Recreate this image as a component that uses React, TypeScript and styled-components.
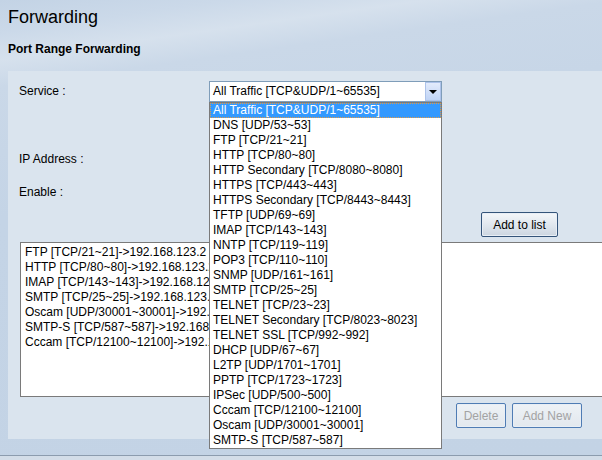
import React from "react";
import styled, { createGlobalStyle, css } from "styled-components";

const GlobalStyle = createGlobalStyle`
  html, body { margin: 0; padding: 0; }
  body {
    font-family: "Liberation Sans", Arial, sans-serif;
    font-size: 12px;
    color: #000;
  }
  * { box-sizing: border-box; }
`;

const Page = styled.div`
  width: 602px;
  height: 460px;
  overflow: hidden;
  padding-top: 7px;
  background: linear-gradient(172deg, #c3d3e5 0%, #cbd9e9 6%, #d6e1ed 11%, #cad8e8 16%, #c4d4e6 40%, #c3d3e5 100%);
`;

const Title = styled.h1`
  margin: 0 0 0 8px;
  font-size: 18px;
  line-height: 20px;
  font-weight: normal;
`;

const Subtitle = styled.h2`
  margin: 15px 0 0 8px;
  font-size: 12px;
  line-height: 14px;
  font-weight: bold;
`;

const Panel = styled.div`
  margin: 15px 0 0 8px;
  height: 368px;
  padding: 10px 0 0 11px;
  background: #dae4ee;
`;

const FormRow = styled.div<{ $top?: number }>`
  display: grid;
  grid-template-columns: 190px auto;
  height: 21px;
  margin-top: ${(p) => p.$top ?? 0}px;
`;

const Label = styled.span`
  line-height: 21px;
`;

const SelectWrap = styled.div`
  position: relative;
  width: 233px;
  height: 21px;
`;

const SelectBox = styled.div`
  display: flex;
  height: 21px;
  border: 1px solid #7f9db9;
  background: #fff;
`;

const SelectValue = styled.span`
  flex: 1;
  padding-left: 3px;
  line-height: 19px;
  white-space: nowrap;
`;

const ArrowButton = styled.span`
  display: flex;
  align-items: center;
  justify-content: center;
  width: 16px;
  height: 19px;
  border: 1px solid #adc3ea;
  background: linear-gradient(#e3ecfc, #bfd3f5);
  &::after {
    content: "";
    border-left: 4px solid transparent;
    border-right: 4px solid transparent;
    border-top: 4px solid #000;
  }
`;

const Dropdown = styled.ul`
  position: absolute;
  top: 100%;
  left: 0;
  z-index: 10;
  width: 233px;
  margin: 0;
  padding: 0;
  list-style: none;
  border: 1px solid #7a7a7a;
  background: #fff;
`;

const Option = styled.li<{ $selected?: boolean }>`
  height: 15px;
  line-height: 15px;
  padding-left: 3px;
  white-space: nowrap;
  ${(p) =>
    p.$selected &&
    css`
      background: #3399ff;
      color: #fff;
      outline: 1px dotted #e39a45;
      outline-offset: -1px;
    `}
`;

const ActionRow = styled.div<{ $top: number; $right: number }>`
  display: flex;
  justify-content: flex-end;
  gap: 6px;
  margin-top: ${(p) => p.$top}px;
  padding-right: ${(p) => p.$right}px;
`;

const Button = styled.button<{ $width: number }>`
  width: ${(p) => p.$width}px;
  height: 25px;
  padding: 0;
  font-family: "Liberation Sans", Arial, sans-serif;
  font-size: 12px;
  color: #000;
  border: 1px solid #34547a;
  border-radius: 2px;
  background: linear-gradient(#f4f7fa, #dde4ec 60%, #cbd5e0);
  box-shadow: inset 0 0 0 1px #e8eef5;
  &:disabled {
    color: #a3a3a3;
    border-color: #4f7cb4;
    background: linear-gradient(#eef2f6, #e2e8ee);
  }
`;

const ListBox = styled.div`
  margin: 5px 0 0 1px;
  width: 700px;
  height: 155px;
  padding: 2px 0 0 4px;
  border: 1px solid #7a7a7a;
  background: #fff;
`;

const ListItem = styled.div`
  height: 15px;
  line-height: 15px;
  white-space: nowrap;
`;

const Footer = styled.div`
  margin-top: 16px;
  height: 10px;
  border-top: 1px solid #8c9cae;
  background: #d3dde8;
`;

const services = [
  "All Traffic [TCP&UDP/1~65535]",
  "DNS [UDP/53~53]",
  "FTP [TCP/21~21]",
  "HTTP [TCP/80~80]",
  "HTTP Secondary [TCP/8080~8080]",
  "HTTPS [TCP/443~443]",
  "HTTPS Secondary [TCP/8443~8443]",
  "TFTP [UDP/69~69]",
  "IMAP [TCP/143~143]",
  "NNTP [TCP/119~119]",
  "POP3 [TCP/110~110]",
  "SNMP [UDP/161~161]",
  "SMTP [TCP/25~25]",
  "TELNET [TCP/23~23]",
  "TELNET Secondary [TCP/8023~8023]",
  "TELNET SSL [TCP/992~992]",
  "DHCP [UDP/67~67]",
  "L2TP [UDP/1701~1701]",
  "PPTP [TCP/1723~1723]",
  "IPSec [UDP/500~500]",
  "Cccam [TCP/12100~12100]",
  "Oscam [UDP/30001~30001]",
  "SMTP-S [TCP/587~587]",
];

const rules = [
  "FTP [TCP/21~21]->192.168.123.2",
  "HTTP [TCP/80~80]->192.168.123.2",
  "IMAP [TCP/143~143]->192.168.123.2",
  "SMTP [TCP/25~25]->192.168.123.2",
  "Oscam [UDP/30001~30001]->192.168.123.2",
  "SMTP-S [TCP/587~587]->192.168.123.2",
  "Cccam [TCP/12100~12100]->192.168.123.2",
];

export default function App() {
  return (
    <>
      <GlobalStyle />
      <Page>
        <Title>Forwarding</Title>
        <Subtitle>Port Range Forwarding</Subtitle>
        <Panel>
          <FormRow>
            <Label>Service :</Label>
            <SelectWrap>
              <SelectBox>
                <SelectValue>{services[0]}</SelectValue>
                <ArrowButton />
              </SelectBox>
              <Dropdown>
                {services.map((s, i) => (
                  <Option key={s} $selected={i === 0}>
                    {s}
                  </Option>
                ))}
              </Dropdown>
            </SelectWrap>
          </FormRow>
          <FormRow $top={47}>
            <Label>IP Address :</Label>
          </FormRow>
          <FormRow $top={12}>
            <Label>Enable :</Label>
          </FormRow>
          <ActionRow $top={9} $right={44}>
            <Button $width={77}>Add to list</Button>
          </ActionRow>
          <ListBox>
            {rules.map((r) => (
              <ListItem key={r}>{r}</ListItem>
            ))}
          </ListBox>
          <ActionRow $top={6} $right={20}>
            <Button $width={50} disabled>
              Delete
            </Button>
            <Button $width={70} disabled>
              Add New
            </Button>
          </ActionRow>
        </Panel>
        <Footer />
      </Page>
    </>
  );
}
